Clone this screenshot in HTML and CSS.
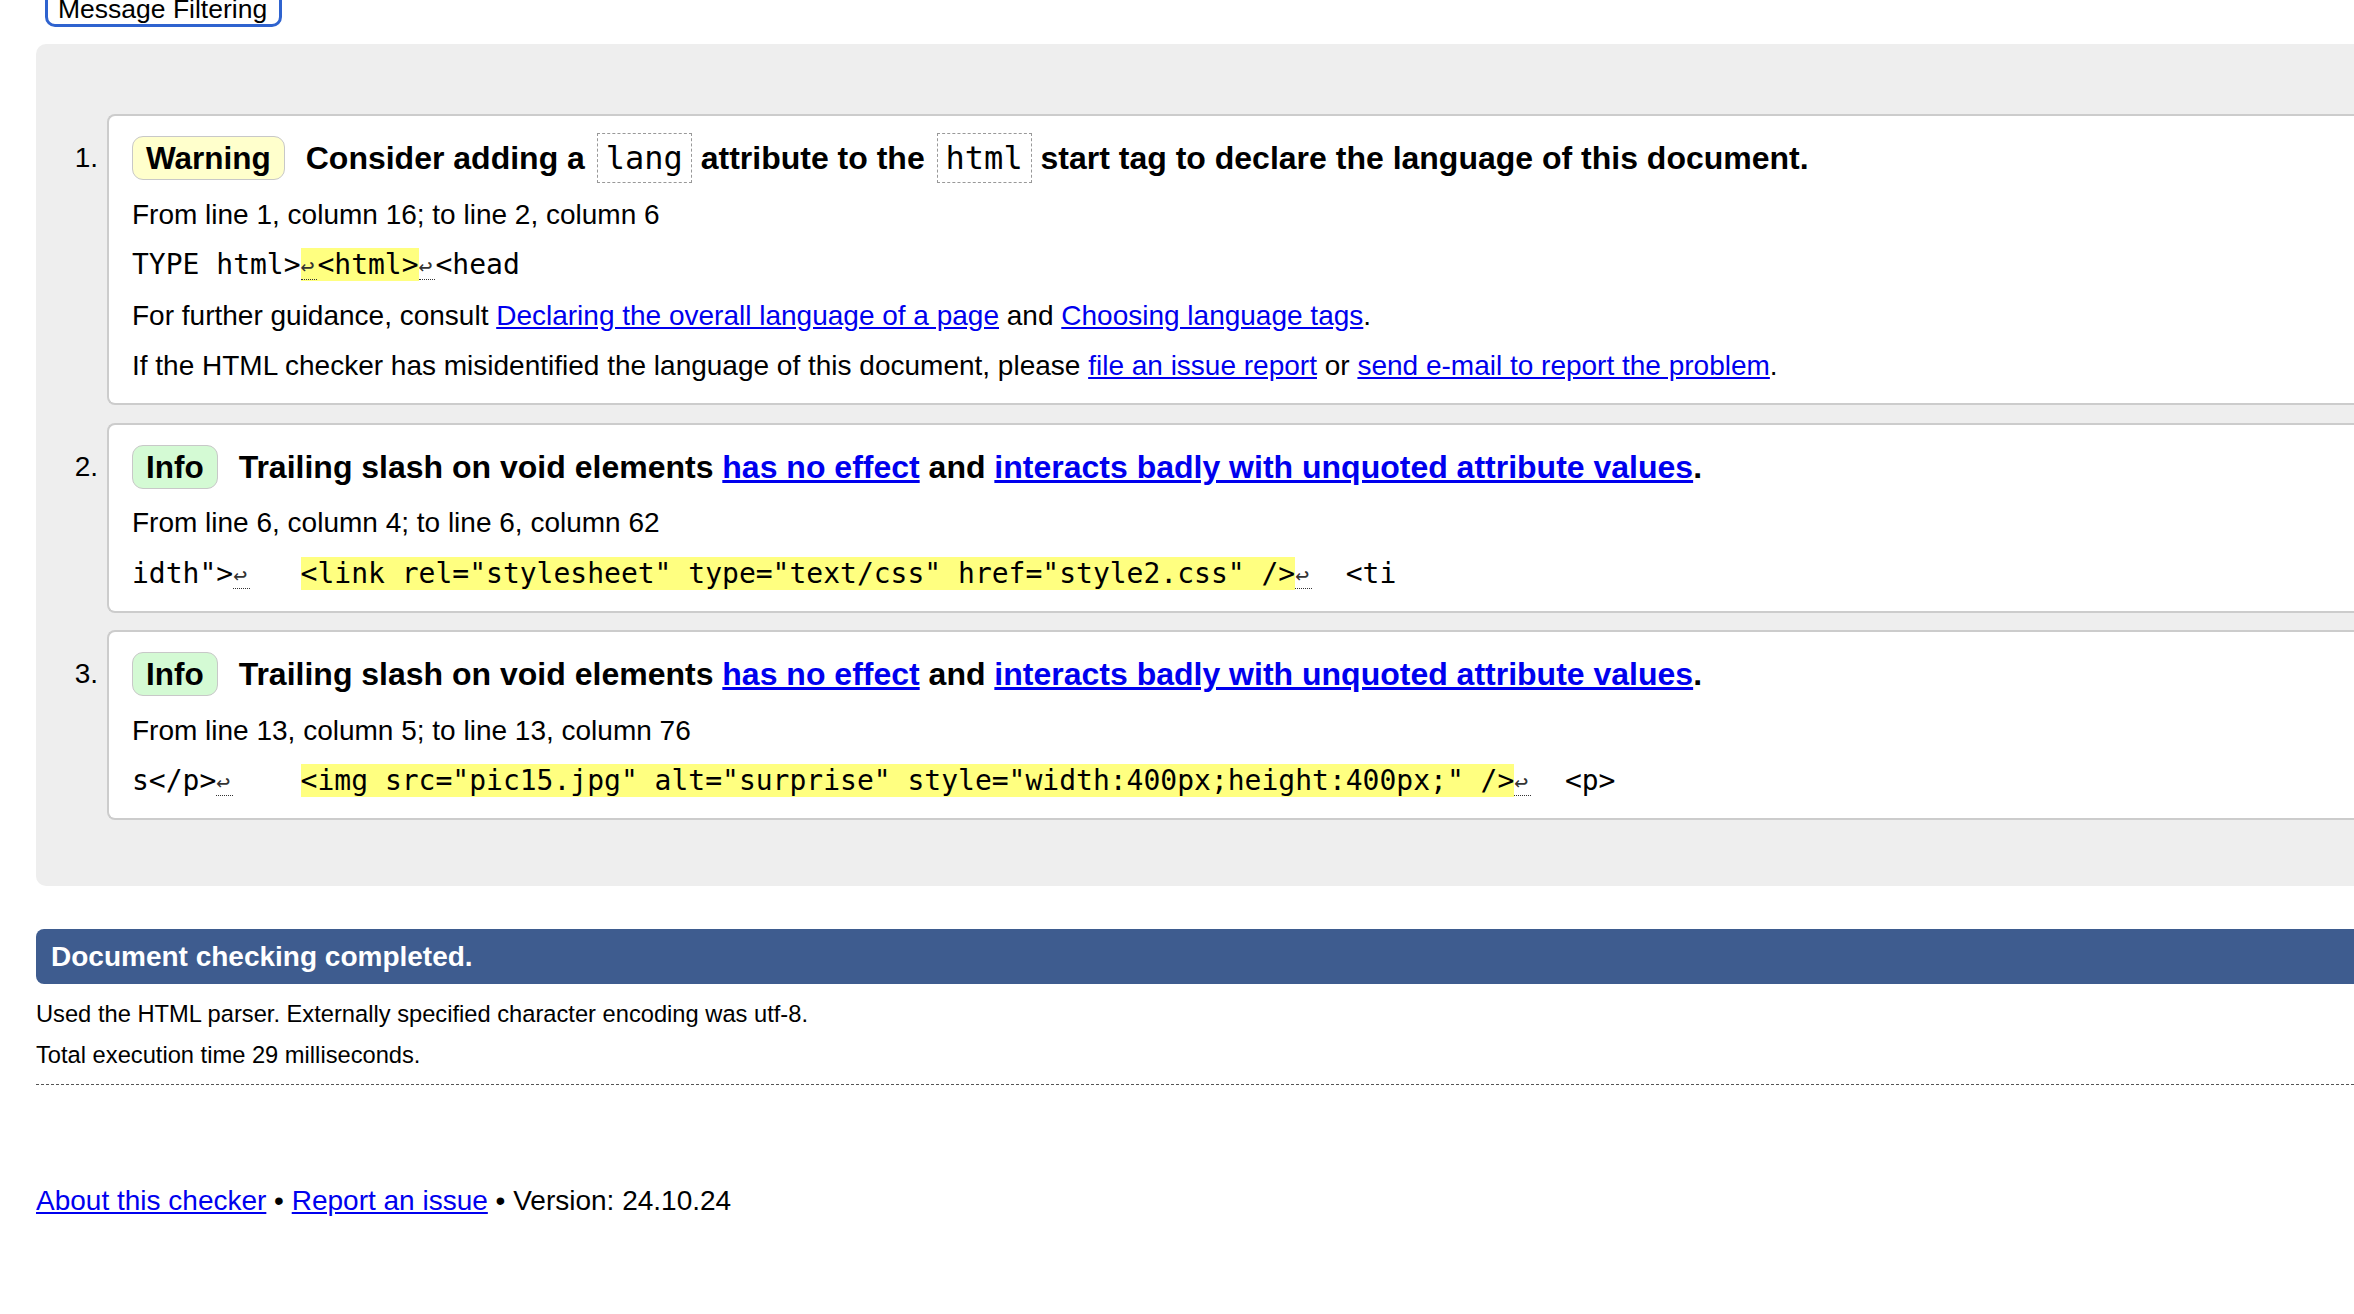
FILE: index.html
```html
<!DOCTYPE html>
<html lang="en">
<head>
<meta charset="utf-8">
<title>Nu Html Checker results</title>
<link rel="stylesheet" href="styles.css">
</head>
<body>
<div class="top"><button class="filter" type="button">Message Filtering</button></div>

<div class="results">
  <ol class="messages">
    <li class="msg">
      <span class="num">1.</span>
      <div class="card">
        <p class="head"><strong class="badge warning">Warning</strong> Consider adding a <code class="kw">lang</code> attribute to the <code class="kw">html</code> start tag to declare the language of this document.</p>
        <p class="loc">From line 1, column 16; to line 2, column 6</p>
        <p class="extract"><code>TYPE html&gt;<mark><span class="lf">↩</span>&lt;html&gt;</mark><span class="lf">↩</span>&lt;head</code></p>
        <p class="loc">For further guidance, consult <a href="#">Declaring the overall language of a page</a> and <a href="#">Choosing language tags</a>.</p>
        <p class="loc">If the HTML checker has misidentified the language of this document, please <a href="#">file an issue report</a> or <a href="#">send e-mail to report the problem</a>.</p>
      </div>
    </li>
    <li class="msg">
      <span class="num">2.</span>
      <div class="card">
        <p class="head"><strong class="badge info">Info</strong> Trailing slash on void elements <a href="#">has no effect</a> and <a href="#">interacts badly with unquoted attribute values</a>.</p>
        <p class="loc">From line 6, column 4; to line 6, column 62</p>
        <p class="extract"><code>idth"&gt;<span class="lf">↩</span>   <mark>&lt;link rel="stylesheet" type="text/css" href="style2.css" /&gt;</mark><span class="lf">↩</span>  &lt;ti</code></p>
      </div>
    </li>
    <li class="msg">
      <span class="num">3.</span>
      <div class="card">
        <p class="head"><strong class="badge info">Info</strong> Trailing slash on void elements <a href="#">has no effect</a> and <a href="#">interacts badly with unquoted attribute values</a>.</p>
        <p class="loc">From line 13, column 5; to line 13, column 76</p>
        <p class="extract"><code>s&lt;/p&gt;<span class="lf">↩</span>    <mark>&lt;img src="pic15.jpg" alt="surprise" style="width:400px;height:400px;" /&gt;</mark><span class="lf">↩</span>  &lt;p&gt;</code></p>
      </div>
    </li>
  </ol>
</div>

<h2 class="done">Document checking completed.</h2>
<p class="stats first">Used the HTML parser. Externally specified character encoding was utf-8.</p>
<p class="stats">Total execution time 29 milliseconds.</p>
<div class="rule"></div>
<p class="footer"><a href="#">About this checker</a> • <a href="#">Report an issue</a> • Version: 24.10.24</p>
</body>
</html>
```
FILE: styles.css
```css
html {
  overflow: hidden;
  background: #fff;
}

body {
  margin: 0 0 0 36px;
  font-family: "Liberation Sans", Arial, Helvetica, sans-serif;
  font-size: 28px;
  color: #000;
}

a {
  color: #0000ee;
  text-decoration: underline;
}

.top {
  margin-top: -15px;
  padding-left: 9px;
  height: 41px;
}

.filter {
  font-family: "Liberation Sans", Arial, sans-serif;
  font-size: 26.5px;
  line-height: 30px;
  padding: 6px 12px 0 10px;
  border: 3px solid #2f63cf;
  border-radius: 10px;
  background: #fff;
  color: #000;
}

.results {
  margin-top: 18px;
  margin-right: -200px;
  background: #eeeeee;
  border-radius: 10px 0 0 10px;
  padding: 70px 0 66px 0;
}

.messages {
  list-style: none;
  margin: 0;
  padding: 0;
  display: flex;
  flex-direction: column;
  gap: 17.5px;
}

.msg {
  display: flex;
  align-items: flex-start;
}

.num {
  flex: 0 0 71px;
  box-sizing: border-box;
  padding-right: 9px;
  padding-top: 28px;
  text-align: right;
  line-height: 32px;
}

.card {
  flex: 1;
  background: #fff;
  border: 2px solid #cccccc;
  border-right: none;
  border-radius: 8px 0 0 8px;
  padding: 20px 0 21px 23px;
  display: flex;
  flex-direction: column;
  gap: 18.5px;
}

.card p {
  margin: 0;
  line-height: 32px;
  white-space: nowrap;
}

.card .head {
  font-size: 32px;
  font-weight: bold;
  line-height: 44px;
}

.badge {
  display: inline-block;
  font-size: 31.5px;
  line-height: 36px;
  padding: 3px 13px;
  border: 1px solid #c8c8c8;
  border-radius: 11px;
  margin-right: 12px;
}

.warning {
  background: #ffffcc;
}

.info {
  background: #d4fad4;
}

.kw {
  font-family: "DejaVu Sans Mono", "Liberation Mono", monospace;
  font-weight: normal;
  font-size: 32px;
  border: 1px dashed #999;
  padding: 5px 8px;
  margin-left: 3px;
}

.extract code {
  font-family: "DejaVu Sans Mono", "Liberation Mono", monospace;
  font-size: 28px;
  white-space: pre;
}

.extract mark {
  background: #ffff80;
  color: #000;
}

.lf {
  display: inline-block;
  width: 16.86px;
  font-size: 23px;
  line-height: 20px;
  padding-bottom: 3px;
  color: #333;
  text-align: left;
  border-bottom: 1px dotted #333;
  box-sizing: border-box;
}

.done {
  margin: 43px -200px 0 0;
  background: #3e5c8f;
  color: #fff;
  font-size: 28px;
  font-weight: bold;
  line-height: 32px;
  padding: 12px 15px 11px;
  border-radius: 8px 0 0 8px;
}

.stats {
  font-size: 23.7px;
  line-height: 28px;
  margin: 13px 0 0;
}

.stats.first {
  margin-top: 16px;
}

.rule {
  margin: 15px -200px 0 0;
  border-top: 1px dashed #555;
}

.footer {
  margin: 100px 0 0;
  line-height: 32px;
}
```
